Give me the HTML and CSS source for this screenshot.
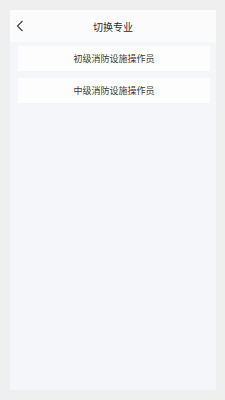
FILE: index.html
```html
<!DOCTYPE html>
<html lang="zh-CN">
<head>
    <meta charset="UTF-8">
    <meta name="viewport" content="width=device-width, initial-scale=1.0">
    <title>切换专业</title>
    <link rel="stylesheet" href="styles.css">
</head>
<body>
    <div class="screen">
        <div class="nav-bar">
            <svg class="back-icon" width="8" height="12" viewBox="0 0 8 12">
                <path d="M6.5 1 L1.5 6 L6.5 11" fill="none" stroke="#444" stroke-width="1.2"/>
            </svg>
            <h1 class="nav-title">切换专业</h1>
        </div>
        <div class="major-list">
            <div class="major-item">初级消防设施操作员</div>
            <div class="major-item">中级消防设施操作员</div>
        </div>
    </div>
</body>
</html>
```

FILE: styles.css
```css
* {
    box-sizing: border-box;
}

html, body {
    height: 100%;
}

body {
    margin: 0;
    padding: 10px 9px 10px 10px;
    background-color: #efefef;
    font-family: "Noto Sans CJK SC", "Noto Sans", sans-serif;
}

.screen {
    height: 100%;
    display: flex;
    flex-direction: column;
    background-color: #f5f6fa;
}

.nav-bar {
    position: relative;
    height: 32px;
    display: flex;
    align-items: center;
    justify-content: center;
    background-color: #fbfbfc;
}

.back-icon {
    position: absolute;
    left: 6px;
    top: 10px;
}

.nav-title {
    margin: 0;
    font-size: 10px;
    font-weight: 400;
    color: #2a2a2a;
}

.major-list {
    display: flex;
    flex-direction: column;
    gap: 7px;
    padding: 4px 6px 0 8px;
}

.major-item {
    height: 25px;
    display: flex;
    align-items: center;
    justify-content: center;
    background-color: #fdfdfe;
    font-size: 9px;
    color: #3a3a3a;
}
```
